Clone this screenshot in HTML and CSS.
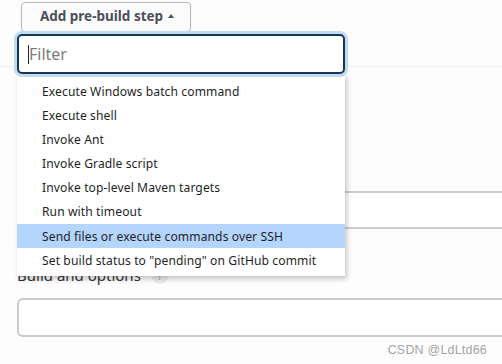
FILE: index.html
```html
<!DOCTYPE html>
<html lang="en">
  <head>
    <meta charset="UTF-8" />
    <title>Pre-build step</title>
    <link rel="stylesheet" href="styles.css">
  </head>
  <body>
    <div class="page">
      <div class="toolbar">
        <button class="add-step">Add pre-build step <span class="caret-up"></span></button>
      </div>

      <div class="section">
        <div class="field-input"></div>
        <div class="field-label">
          <span>Build and options</span>
          <span class="help">?</span>
        </div>
        <div class="field-box"></div>
      </div>

      <div class="dropdown">
        <div class="filter">
          <span class="cursor"></span>
          <span class="placeholder">Filter</span>
        </div>
        <ul class="menu">
          <li>Execute Windows batch command</li>
          <li>Execute shell</li>
          <li>Invoke Ant</li>
          <li>Invoke Gradle script</li>
          <li>Invoke top-level Maven targets</li>
          <li>Run with timeout</li>
          <li class="active">Send files or execute commands over SSH</li>
          <li>Set build status to "pending" on GitHub commit</li>
        </ul>
      </div>
    </div>
    <div class="watermark">CSDN @LdLtd66</div>
  </body>
</html>
```

FILE: styles.css
```css
body {
  margin: 0;
  background: #fdfdfd;
  font-family: "Noto Sans", "Open Sans", sans-serif;
  color: #222;
  overflow: hidden;
  height: 364px;
  position: relative;
}

.page {
  position: relative;
  padding-left: 17px;
}

.toolbar {
  padding: 2px 0 0 4px;
  height: 32px;
}

.add-step {
  height: 30px;
  width: 170px;
  padding: 0 0 2px 2px;
  background: #fbfbfb;
  border: 1px solid #b4b8bf;
  border-radius: 4px;
  box-shadow: 0 1px 2px rgba(0,0,0,0.08);
  font-family: inherit;
  font-size: 13.5px;
  font-weight: bold;
  color: #4b4f5b;
  display: flex;
  align-items: center;
  justify-content: center;
  gap: 5px;
}

.caret-up {
  width: 0;
  height: 0;
  border-left: 3.5px solid transparent;
  border-right: 3.5px solid transparent;
  border-bottom: 4px solid #4b4f5b;
  margin-top: -1px;
}

.section {
  margin-top: 32px;
  border-top: 1px solid #efefef;
  margin-left: -17px;
  padding: 124px 0 0 17px;
}

.field-input {
  height: 34px;
  border: 2px solid #cdcdcd;
  border-right: none;
  border-radius: 5px 0 0 5px;
  background: #fff;
}

.field-label {
  margin-top: 36px;
  height: 20px;
  display: flex;
  align-items: center;
  gap: 10px;
  font-size: 15px;
  color: #333;
}

.help {
  width: 18px;
  height: 18px;
  border-radius: 50%;
  background: #ececec;
  color: #999;
  font-size: 11px;
  display: flex;
  align-items: center;
  justify-content: center;
}

.field-box {
  margin-top: 13px;
  height: 35px;
  border: 2px solid #cbcbcb;
  border-right: none;
  border-radius: 6px 0 0 6px;
  background: #fff;
}

.dropdown {
  position: absolute;
  left: 17px;
  top: 34px;
  width: 328px;
  z-index: 5;
}

.filter {
  height: 36px;
  border: 2px solid #12395a;
  border-radius: 5px;
  background: #fff;
  box-shadow: 0 0 0 3px #c3dbec;
  display: flex;
  align-items: center;
  padding-left: 9px;
  position: relative;
  z-index: 2;
}

.cursor {
  width: 1px;
  height: 19px;
  background: #222;
}

.placeholder {
  font-size: 16px;
  color: #7b7b7b;
  margin-top: -1px;
}

.menu {
  list-style: none;
  margin: 0;
  padding: 5px 0 4px;
  background: #fff;
  box-shadow: 2px 3px 5px rgba(0,0,0,0.22);
}

.menu li {
  height: 24.1px;
  line-height: 26px;
  padding-left: 25px;
  font-size: 12.1px;
  letter-spacing: 0.1px;
  color: #1f1f1f;
  white-space: nowrap;
}

.menu li.active {
  background: #b4d5fd;
}

.watermark {
  position: absolute;
  right: 15px;
  bottom: 7px;
  font-family: "Liberation Sans", Arial, sans-serif;
  font-size: 12.5px;
  color: #a4a4a4;
  letter-spacing: 0.2px;
}
```
